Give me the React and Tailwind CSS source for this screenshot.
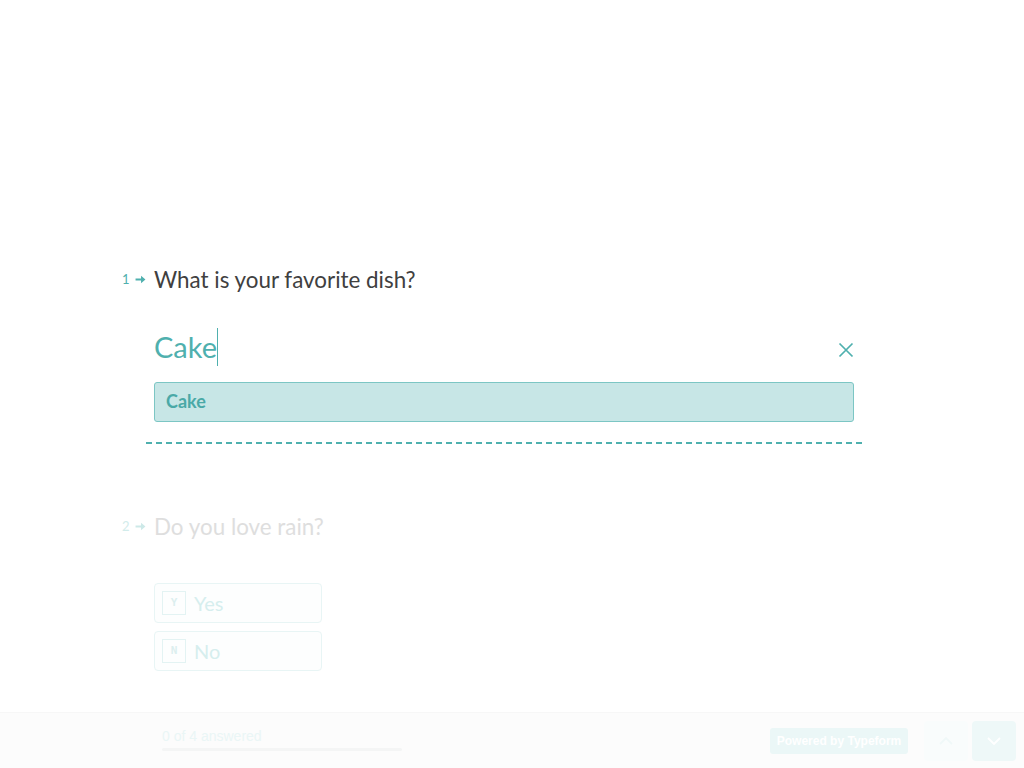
import React, { useState } from 'react';

const font = { fontFamily: 'Lato, "Open Sans", sans-serif' };

const Arrow = ({ className }) => (
  <svg viewBox="0 0 10 10" className={className} fill="currentColor">
    <path d="M0.5 4.1h5V1.6l4 3.4-4 3.4V5.9h-5z" />
  </svg>
);

const ChoiceButton = ({ letter, label }) => (
  <div className="flex h-[40px] w-[168px] items-center rounded-[4px] border border-[#e8f5f5] bg-[#fdfefe] px-[7px]">
    <span className="flex h-[24px] w-[24px] items-center justify-center border border-[#e3f3f3] text-[11px] font-bold text-[#dcefef]" style={{ fontFamily: '"DejaVu Sans Mono", monospace' }}>
      {letter}
    </span>
    <span className="ml-[8px] text-[20px] text-[#d6eeee]">{label}</span>
  </div>
);

const App = () => {
  const [answer, setAnswer] = useState('Cake');

  return (
    <div className="relative h-[768px] w-[1024px] overflow-hidden bg-white" style={font}>
      <div className="pt-[263px] pl-[122px]">
        {/* question 1 */}
        <div className="flex items-center">
          <span className="w-[13px] text-[13px] text-[#4fb0ae]">1</span>
          <Arrow className="h-[11px] w-[11px] text-[#4fb0ae]" />
          <span className="ml-[8px] text-[22.4px] text-[#404040]">What is your favorite dish?</span>
        </div>

        <div className="ml-[24px] mt-[30px] w-[716px]">
          <div className="flex items-center justify-between pl-[8px] pr-[8px]">
            <div className="flex h-[40px] items-center">
              <span className="text-[29px] text-[#4fb0ae]">{answer}</span>
              <span className="h-[38px] w-[1px] bg-[#4fb0ae]" />
            </div>
            <button onClick={() => setAnswer('')} className="mt-[6px] text-[#4fb0ae]">
              <svg viewBox="0 0 16 16" className="h-[16px] w-[16px]" fill="none" stroke="currentColor" strokeWidth="1.7">
                <path d="M1.5 1.5l13 13M14.5 1.5l-13 13" />
              </svg>
            </button>
          </div>
          <div className="ml-[8px] mt-[15px] flex h-[40px] w-[700px] items-center rounded-[3px] border border-[#7cc6c4] bg-[#c7e6e6] px-[11px]">
            <span className="text-[18px] font-bold text-[#4aa9a7]">Cake</span>
          </div>
          <div className="mt-[20px] h-0 border-t-2 border-dashed border-[#4fb0ae]" />
        </div>

        {/* question 2 */}
        <div className="mt-[66px] flex items-center">
          <span className="w-[13px] text-[13px] text-[#d2eceb]">2</span>
          <Arrow className="h-[11px] w-[11px] text-[#cde9e8]" />
          <span className="ml-[8px] text-[22.4px] text-[#dedede]">Do you love rain?</span>
        </div>
        <div className="ml-[32px] mt-[40px] flex flex-col gap-[8px]">
          <ChoiceButton letter="Y" label="Yes" />
          <ChoiceButton letter="N" label="No" />
        </div>
      </div>

      {/* footer */}
      <div className="absolute bottom-0 left-0 flex h-[56px] w-full items-center border-t border-[#f7f7f7] bg-[#fcfcfc]">
        <div className="mb-[4px] ml-[162px] w-[240px]" style={{ fontFamily: '"Liberation Sans", Arial, sans-serif' }}>
          <div className="text-[14px] leading-[18px] text-[#eaf6f6]">0 of 4 answered</div>
          <div className="mt-[3px] h-[3px] w-full rounded-full bg-[#f4f5f5]" />
        </div>
        <div className="ml-auto flex items-center">
          <div className="flex h-[26px] w-[138px] items-center justify-center rounded-[3px] bg-[#ebf7f7] text-[12px] font-bold text-white" style={{ fontFamily: '"Liberation Sans", Arial, sans-serif' }}>
            Powered by Typeform
          </div>
          <div className="ml-[16px] flex h-[40px] w-[44px] items-center justify-center rounded-[4px] bg-[#f9fcfc]">
            <svg viewBox="0 0 16 16" className="h-[16px] w-[16px]" fill="none" stroke="#f0f8f8" strokeWidth="1.8">
              <path d="M2 11l6-6 6 6" />
            </svg>
          </div>
          <div className="ml-[4px] mr-[8px] flex h-[40px] w-[44px] items-center justify-center rounded-[4px] bg-[#eef8f8]">
            <svg viewBox="0 0 16 16" className="h-[16px] w-[16px]" fill="none" stroke="#ffffff" strokeWidth="1.8">
              <path d="M2 5l6 6 6-6" />
            </svg>
          </div>
        </div>
      </div>
    </div>
  );
};

export default App;
